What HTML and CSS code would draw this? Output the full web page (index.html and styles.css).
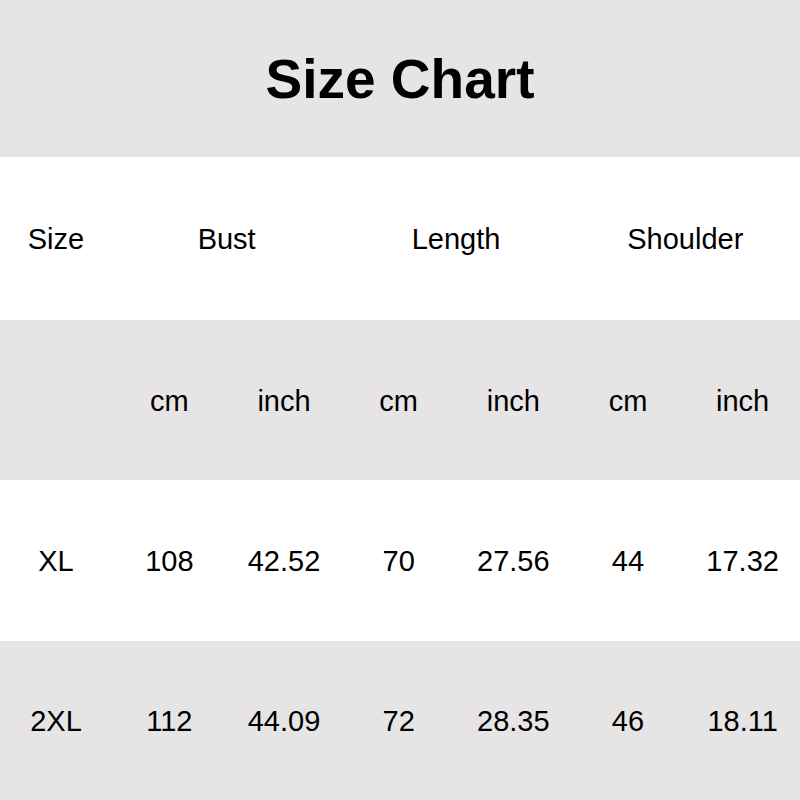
FILE: index.html
```html
<!DOCTYPE html>
<html>
<head>
<meta charset="utf-8">
<link rel="stylesheet" href="styles.css">
</head>
<body>
<div class="chart">
  <div class="title">Size Chart</div>
  <div class="row white r1">
    <div class="cell">Size</div>
    <div class="cell span2">Bust</div>
    <div class="cell span2">Length</div>
    <div class="cell span2">Shoulder</div>
  </div>
  <div class="row gray r2">
    <div class="cell"></div>
    <div class="cell">cm</div>
    <div class="cell">inch</div>
    <div class="cell">cm</div>
    <div class="cell">inch</div>
    <div class="cell">cm</div>
    <div class="cell">inch</div>
  </div>
  <div class="row white r3">
    <div class="cell">XL</div>
    <div class="cell">108</div>
    <div class="cell">42.52</div>
    <div class="cell">70</div>
    <div class="cell">27.56</div>
    <div class="cell">44</div>
    <div class="cell">17.32</div>
  </div>
  <div class="row gray r4">
    <div class="cell">2XL</div>
    <div class="cell">112</div>
    <div class="cell">44.09</div>
    <div class="cell">72</div>
    <div class="cell">28.35</div>
    <div class="cell">46</div>
    <div class="cell">18.11</div>
  </div>
</div>
</body>
</html>
```
FILE: styles.css
```css
html, body {
  margin: 0;
  padding: 0;
  background: #ffffff;
}
.chart {
  width: 800px;
  height: 800px;
  display: flex;
  flex-direction: column;
  font-family: "Liberation Sans", Arial, sans-serif;
  color: #000;
}
.title {
  height: 157px;
  background: #e6e4e5;
  display: flex;
  align-items: center;
  justify-content: center;
  font-size: 55px;
  font-weight: bold;
}
.row {
  display: grid;
  grid-template-columns: 112px repeat(6, 1fr);
}
.white { background: #ffffff; }
.gray { background: #e6e4e5; }
.r1 { height: 163px; }
.r2 { height: 160px; }
.r3 { height: 161px; }
.r4 { height: 159px; }
.cell {
  display: flex;
  align-items: center;
  justify-content: center;
  font-size: 29px;
  padding-top: 2px;
}
.span2 { grid-column: span 2; }
```
